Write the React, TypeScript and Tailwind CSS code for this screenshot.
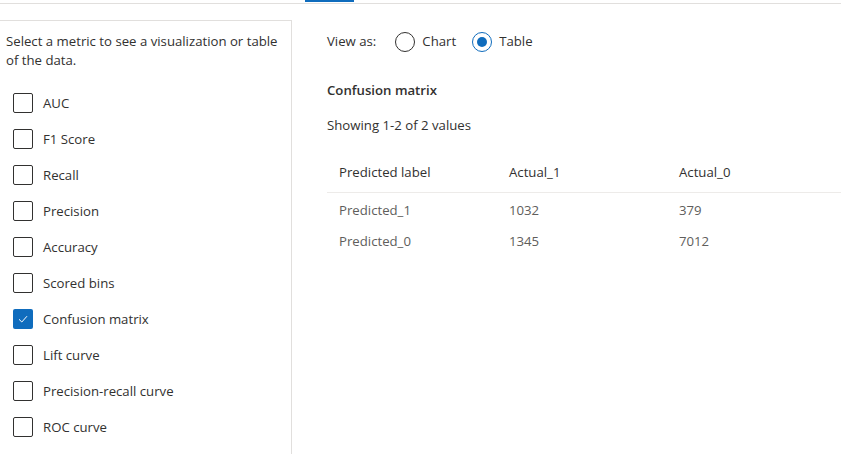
import type React from 'react'

const metrics = [
  {label: 'AUC', checked: false},
  {label: 'F1 Score', checked: false},
  {label: 'Recall', checked: false},
  {label: 'Precision', checked: false},
  {label: 'Accuracy', checked: false},
  {label: 'Scored bins', checked: false},
  {label: 'Confusion matrix', checked: true},
  {label: 'Lift curve', checked: false},
  {label: 'Precision-recall curve', checked: false},
  {label: 'ROC curve', checked: false}
]

const rows = [
  ['Predicted_1', '1032', '379'],
  ['Predicted_0', '1345', '7012']
]

const Checkbox: React.FC<{checked: boolean}> = ({checked}) =>
  checked ? (
    <div className="w-[20px] h-[20px] rounded-[2px] bg-[#0f6cbd] flex items-center justify-center">
      <svg width="12" height="12" viewBox="0 0 12 12" fill="none">
        <path d="M2 6.3 L4.8 9 L10 3.2" stroke="white" strokeWidth="1" />
      </svg>
    </div>
  ) : (
    <div className="w-[20px] h-[20px] rounded-[2px] border border-[#323130] bg-white" />
  )

const Radio: React.FC<{checked: boolean; label: string}> = ({checked, label}) => (
  <div className="flex items-center gap-[7px]">
    {checked ? (
      <div className="w-[20px] h-[20px] rounded-full border border-[#0f6cbd] flex items-center justify-center">
        <div className="w-[10px] h-[10px] rounded-full bg-[#0f6cbd]" />
      </div>
    ) : (
      <div className="w-[20px] h-[20px] rounded-full border border-[#323130]" />
    )}
    <span>{label}</span>
  </div>
)

const App: React.FC = () => {
  return (
    <div
      className="w-[841px] h-[454px] bg-white overflow-hidden text-[13.2px] leading-[19px] text-[#323130]"
      style={{fontFamily: '"Open Sans", "Noto Sans", sans-serif'}}>
      {/* tab strip */}
      <div className="h-[4px] border-b border-[#e1dfdd]">
        <div className="ml-[305px] w-[49px] h-[2px] bg-[#0f6cbd]" />
      </div>

      <div className="flex mt-[16px] h-[434px]">
        {/* metric list */}
        <div className="w-[292px] shrink-0 border-t border-r border-[#e1dfdd] pl-[6px] pt-[11px]">
          <p className="pr-[6px]">Select a metric to see a visualization or table of the data.</p>
          <div className="mt-[15px] flex flex-col">
            {metrics.map((m) => (
              <div key={m.label} className="h-[36px] flex items-center pl-[7px] gap-[10px]">
                <Checkbox checked={m.checked} />
                <span>{m.label}</span>
              </div>
            ))}
          </div>
        </div>

        {/* result */}
        <div className="flex-1 pl-[35px] pt-[12px]">
          <div className="flex items-center h-[19px]">
            <span className="mr-[19px]">View as:</span>
            <div className="flex items-center gap-[16px]">
              <Radio checked={false} label="Chart" />
              <Radio checked label="Table" />
            </div>
          </div>

          <div className="mt-[30px] font-semibold">Confusion matrix</div>
          <div className="mt-[16px]">Showing 1-2 of 2 values</div>

          <div className="mt-[18px]">
            <div className="flex h-[40px] items-center border-b border-[#edebe9]">
              <div className="w-[170px] pl-[12px]">Predicted label</div>
              <div className="w-[170px] pl-[12px]">Actual_1</div>
              <div className="w-[170px] pl-[12px]">Actual_0</div>
            </div>
            <div className="pt-[2px]">
              {rows.map((r) => (
                <div key={r[0]} className="flex h-[31px] items-center text-[#605e5c]">
                  {r.map((c, i) => (
                    <div key={i} className="w-[170px] pl-[12px]">
                      {c}
                    </div>
                  ))}
                </div>
              ))}
            </div>
          </div>
        </div>
      </div>
    </div>
  )
}

export default App
